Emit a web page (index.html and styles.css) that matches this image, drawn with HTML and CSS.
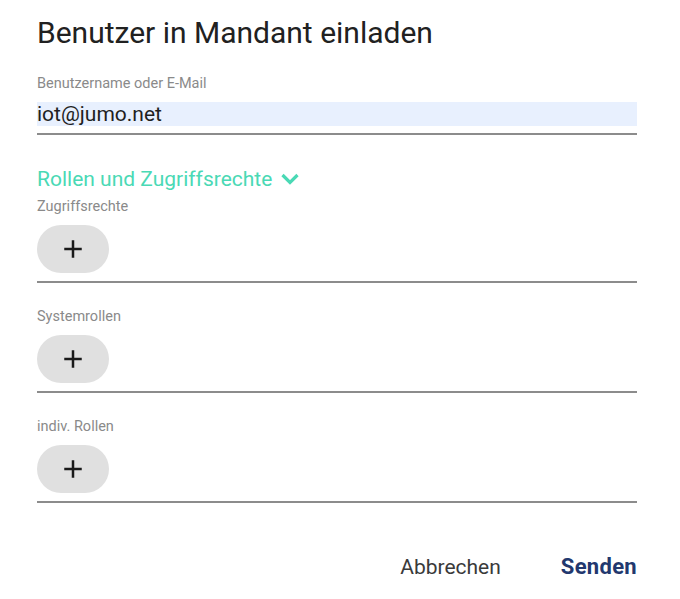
FILE: index.html
```html
<!DOCTYPE html>
<html lang="de">
<head>
<meta charset="utf-8">
<link rel="stylesheet" href="styles.css">
</head>
<body>
<div class="dialog">
  <h1 class="title">Benutzer in Mandant einladen</h1>
  <div class="field">
    <label class="label">Benutzername oder E-Mail</label>
    <div class="input-wrap"><div class="input">iot@jumo.net</div></div>
  </div>
  <div class="section-head">
    <span>Rollen und Zugriffsrechte</span>
    <svg class="chev" width="18" height="12" viewBox="0 0 18 12"><polyline points="1.5,2 9,9.5 16.5,2" fill="none" stroke="currentColor" stroke-width="3.2"/></svg>
  </div>
  <div class="chips-field first">
    <div class="label">Zugriffsrechte</div>
    <div class="chip-row"><button class="chip"><svg width="24" height="24" viewBox="0 0 24 24"><path d="M19 13h-6v6h-2v-6H5v-2h6V5h2v6h6v2z" fill="currentColor"/></svg></button></div>
  </div>
  <div class="chips-field">
    <div class="label">Systemrollen</div>
    <div class="chip-row"><button class="chip"><svg width="24" height="24" viewBox="0 0 24 24"><path d="M19 13h-6v6h-2v-6H5v-2h6V5h2v6h6v2z" fill="currentColor"/></svg></button></div>
  </div>
  <div class="chips-field">
    <div class="label">indiv. Rollen</div>
    <div class="chip-row"><button class="chip"><svg width="24" height="24" viewBox="0 0 24 24"><path d="M19 13h-6v6h-2v-6H5v-2h6V5h2v6h6v2z" fill="currentColor"/></svg></button></div>
  </div>
  <div class="actions">
    <button class="btn cancel">Abbrechen</button>
    <button class="btn send">Senden</button>
  </div>
</div>
</body>
</html>
```
FILE: styles.css
```css
html, body { margin: 0; padding: 0; background: #fff; }
body { font-family: Roboto, "Noto Sans", sans-serif; color: #212121; }
.dialog { width: 600px; padding: 0 43px 0 37px; }
.title { margin: 0; padding-top: 17px; font-size: 30px; font-weight: 400; line-height: 32px; color: #212121; }
.label { display: block; font-size: 14.5px; line-height: 16px; color: #8a8a8a; }
.field { margin-top: 27px; }
.input-wrap { margin-top: 10px; padding-bottom: 7px; border-bottom: 2px solid #8c8c8c; }
.input { background: #e8f0fe; font-size: 21px; line-height: 24px; height: 24px; color: #1f1f1f; }
.section-head { margin-top: 32px; display: flex; align-items: center; gap: 9px; color: #4ad9b5; font-size: 21px; line-height: 24px; }
.chev { margin-top: -1px; }
.chips-field { border-bottom: 2px solid #8c8c8c; padding-bottom: 8px; margin-top: 26px; }
.chips-field.first { margin-top: 8px; }
.chip-row { margin-top: 10px; display: flex; }
.chip { width: 72px; height: 48px; border-radius: 24px; border: 0; background: #e0e0e0; display: flex; align-items: center; justify-content: center; color: #1a1a1a; padding: 0; }
.chip svg { width: 30px; height: 30px; }
.actions { margin-top: 52px; display: flex; justify-content: flex-end; align-items: baseline; gap: 60px; }
.btn { border: 0; background: none; padding: 0; font-family: Roboto, "Noto Sans", sans-serif; font-size: 21px; line-height: 24px; }
.cancel { color: #3a3a3a; }
.send { color: #22386e; font-weight: 700; font-size: 22px; letter-spacing: 0.3px; }
```
